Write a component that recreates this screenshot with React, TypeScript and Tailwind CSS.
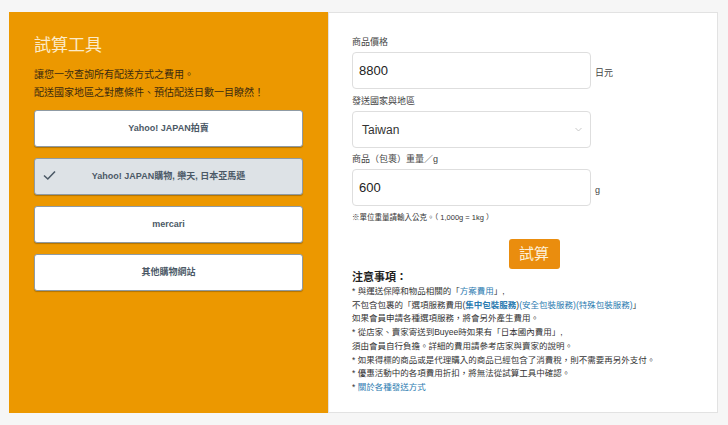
import React from "react";

const font = { fontFamily: '"Liberation Sans", "Noto Sans CJK TC", "Noto Sans CJK SC", sans-serif' };

function Option({ label, selected }: { label: string; selected?: boolean }) {
  return (
    <div
      className={`relative flex h-[37px] w-[269px] items-center justify-center rounded-[3px] border border-[#8f9ba4] text-[9px] font-bold text-[#4b5966] shadow-[0_1px_1px_rgba(0,0,0,0.25)] ${
        selected ? "bg-[#dde2e6]" : "bg-white"
      }`}
    >
      {selected && (
        <svg className="absolute left-[8px] top-[11px]" width="13" height="11" viewBox="0 0 13 11">
          <path d="M1 5.5 L4.8 9 L12 1.5" fill="none" stroke="#4b5966" strokeWidth="1.6" />
        </svg>
      )}
      <span>{label}</span>
    </div>
  );
}

export default function App() {
  return (
    <div className="h-[425px] w-[728px] bg-[#f6f6f6] pl-[9px] pt-[12px]" style={font}>
      <div className="flex h-[401px]">
        <div className="flex w-[319px] flex-col bg-[#ec9800] pl-[25px] pt-[23px]">
          <div className="text-[17px] leading-[22px] text-[#fcebc9]">試算工具</div>
          <div className="mt-[9px] text-[10px] leading-[18px] text-[#3b2a10]">
            <div>讓您一次查詢所有配送方式之費用。</div>
            <div>配送國家地區之對應條件、預估配送日數一目瞭然！</div>
          </div>
          <div className="mt-[8px] flex flex-col gap-[11px]">
            <Option label="Yahoo! JAPAN拍賣" />
            <Option label="Yahoo! JAPAN購物, 樂天, 日本亞馬遜" selected />
            <Option label="mercari" />
            <Option label="其他購物網站" />
          </div>
        </div>
        <div className="w-[390px] border border-[#e2e2e2] bg-white pl-[23px] pt-[22px]">
          <div className="text-[9px] leading-[14px] text-[#444]">商品價格</div>
          <div className="mt-[3px] flex items-end">
            <div className="flex h-[37px] w-[239px] items-center rounded-[4px] border border-[#dedede] pl-[6px] text-[13px] text-[#222]">
              8800
            </div>
            <div className="mb-[9px] ml-[4px] text-[9px] text-[#444]">日元</div>
          </div>
          <div className="mt-[5px] text-[9px] leading-[14px] text-[#444]">發送國家與地區</div>
          <div className="mt-[3px] flex h-[37px] w-[239px] items-center justify-between rounded-[4px] border border-[#dedede] pl-[9px] pr-[8px] text-[12px] text-[#333]">
            <span>Taiwan</span>
            <svg width="7" height="5" viewBox="0 0 7 5">
              <path d="M0.5 1 L3.5 4 L6.5 1" fill="none" stroke="#bbb" strokeWidth="0.8" />
            </svg>
          </div>
          <div className="mt-[4px] text-[9px] leading-[14px] text-[#444]">商品（包裹）重量／g</div>
          <div className="mt-[3px] flex items-end">
            <div className="flex h-[37px] w-[239px] items-center rounded-[4px] border border-[#dedede] pl-[6px] text-[13px] text-[#222]">
              600
            </div>
            <div className="mb-[9px] ml-[4px] text-[9px] text-[#444]">g</div>
          </div>
          <div className="mt-[6px] text-[7.5px] leading-[12px] text-[#333]">※單位重量請輸入公克。（ 1,000g = 1kg ）</div>
          <div className="mt-[15px] flex w-[357px] justify-center">
            <div className="ml-[7px] flex h-[30px] w-[51px] items-center justify-center rounded-[3px] bg-[#ea8d0e] text-[15px] text-[#fdf0d8]">
              試算
            </div>
          </div>
          <div className="mt-[1px] text-[11px] font-bold leading-[14px] text-[#222]">注意事項：</div>
          <div className="mt-[1px] text-[8.5px] leading-[13.7px] text-[#333]">
            <div>
              * 與運送保障和物品相關的「<span className="text-[#2b7bb0]">方案費用</span>」,
            </div>
            <div>
              不包含包裹的「選項服務費用(<span className="font-bold text-[#2b7bb0]">集中包裝服務</span>)
              <span className="text-[#2b7bb0]">(安全包裝服務)</span>
              <span className="text-[#2b7bb0]">(特殊包裝服務)</span>」
            </div>
            <div>如果會員申請各種選項服務，將會另外產生費用。</div>
            <div>* 從店家、賣家寄送到Buyee時如果有「日本國內費用」,</div>
            <div>須由會員自行負擔。詳細的費用請參考店家與賣家的說明。</div>
            <div>* 如果得標的商品或是代理購入的商品已經包含了消費稅，則不需要再另外支付。</div>
            <div>* 優惠活動中的各項費用折扣，將無法從試算工具中確認。</div>
            <div>
              * <span className="text-[#2b7bb0]">關於各種發送方式</span>
            </div>
          </div>
        </div>
      </div>
    </div>
  );
}
